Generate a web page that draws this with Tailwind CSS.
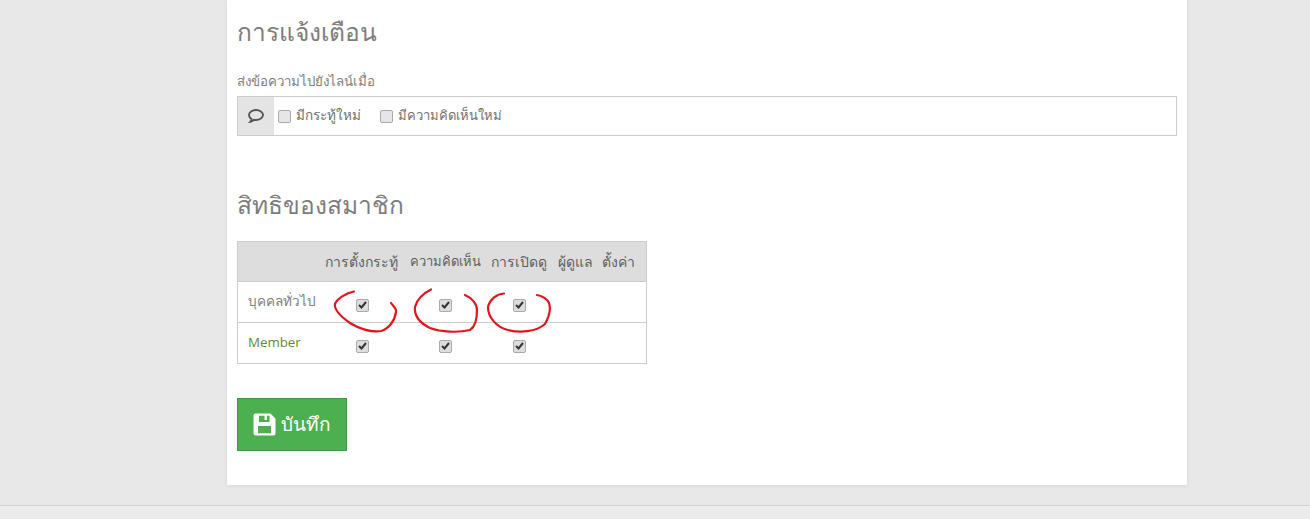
<!DOCTYPE html>
<html lang="th">
<head>
<meta charset="utf-8">
<script src="https://cdn.jsdelivr.net/npm/@tailwindcss/browser@4"></script>
<title>ตั้งค่า</title>
</head>
<body class="bg-[#e8e8e8] font-['Open_Sans','Noto_Sans',sans-serif] text-[#777] overflow-hidden">
<div class="h-[519px] flex flex-col">
  <main class="w-[960px] h-[485px] ml-[227px] bg-white shadow-[0_1px_4px_rgba(0,0,0,0.08)] px-[10px] shrink-0">
    <h2 class="pt-[15px] h-[50px] text-[24.500px] leading-[34px] text-[#7d7d7d]">การแจ้งเตือน</h2>
    <label class="block mt-[20px] h-[20px] text-[13.300px] leading-[22px] text-[#808080]">ส่งข้อความไปยังไลน์เมื่อ</label>
    <div class="mt-[6px] h-[40px] border border-[#ccc] flex items-center">
      <span class="w-[36px] h-full bg-[#e4e4e4] flex items-center justify-center">
        <svg width="16" height="14" viewBox="0 0 16 14" fill="none" stroke="#555" stroke-width="1.900"><path d="M8 1c3.800 0 7 2.200 7 5s-3.200 5-7 5c-.7 0-1.300-.1-2-.2-1 .9-2.200 1.700-3.700 2 .7-.8 1.100-1.800 1.200-2.800C2 9 1 7.600 1 6c0-2.800 3.200-5 7-5z"/></svg>
      </span>
      <div class="flex items-center text-[13.500px] text-[#707070] ml-[4px] -mt-[1px]">
        <span class="w-[13px] h-[13px] mr-[5px] mt-[1px] rounded-[2px] border border-[#aaa] bg-[#e6e6e6]"></span>
        <span class="w-[64px] mr-[20px] whitespace-nowrap">มีกระทู้ใหม่</span>
        <span class="w-[13px] h-[13px] mr-[5px] mt-[1px] rounded-[2px] border border-[#aaa] bg-[#e6e6e6]"></span>
        <span class="text-[13px]">มีความคิดเห็นใหม่</span>
      </div>
    </div>
    <h2 class="mt-[52px] h-[40px] text-[24.500px] leading-[34px] text-[#7d7d7d]">สิทธิของสมาชิก</h2>
    <div class="relative mt-[13px] w-[410px]">
      <table class="w-[410px] border-collapse border border-[#ccc] text-[14px] table-fixed">
        <thead>
          <tr class="h-[40px] bg-[#ddd] text-[#5e5e5e]">
            <th class="w-[83px] font-normal"></th>
            <th class="w-[83px] font-normal whitespace-nowrap pr-[2px]">การตั้งกระทู้</th>
            <th class="w-[83px] font-normal whitespace-nowrap text-[13px]">ความคิดเห็น</th>
            <th class="w-[65px] font-normal whitespace-nowrap">การเปิดดู</th>
            <th class="w-[47px] font-normal whitespace-nowrap">ผู้ดูแล</th>
            <th class="font-normal whitespace-nowrap pr-[7px]">ตั้งค่า</th>
          </tr>
        </thead>
        <tbody>
          <tr class="h-[41px] border-t border-[#ccc]">
            <td class="pl-[10px] pb-[2px] whitespace-nowrap text-[13.500px] text-[#808080]">บุคคลทั่วไป</td>
            <td><span class="mx-auto mt-[6px] w-[13px] h-[13px] rounded-[2px] border border-[#aaa] bg-[#ddd] flex items-center justify-center"><svg width="9" height="8" viewBox="0 0 9 8" fill="none" stroke="#333" stroke-width="2"><path d="M1 4l2.500 2.500L8 1"/></svg></span></td>
            <td><span class="mx-auto mt-[6px] w-[13px] h-[13px] rounded-[2px] border border-[#aaa] bg-[#ddd] flex items-center justify-center"><svg width="9" height="8" viewBox="0 0 9 8" fill="none" stroke="#333" stroke-width="2"><path d="M1 4l2.500 2.500L8 1"/></svg></span></td>
            <td><span class="mx-auto mt-[6px] w-[13px] h-[13px] rounded-[2px] border border-[#aaa] bg-[#ddd] flex items-center justify-center"><svg width="9" height="8" viewBox="0 0 9 8" fill="none" stroke="#333" stroke-width="2"><path d="M1 4l2.500 2.500L8 1"/></svg></span></td>
            <td></td><td></td>
          </tr>
          <tr class="h-[41px] border-t border-[#ccc]">
            <td class="pl-[10px] text-[13.300px] text-[#5d8a36]">Member</td>
            <td><span class="mx-auto mt-[6px] w-[13px] h-[13px] rounded-[2px] border border-[#aaa] bg-[#ddd] flex items-center justify-center"><svg width="9" height="8" viewBox="0 0 9 8" fill="none" stroke="#333" stroke-width="2"><path d="M1 4l2.500 2.500L8 1"/></svg></span></td>
            <td><span class="mx-auto mt-[6px] w-[13px] h-[13px] rounded-[2px] border border-[#aaa] bg-[#ddd] flex items-center justify-center"><svg width="9" height="8" viewBox="0 0 9 8" fill="none" stroke="#333" stroke-width="2"><path d="M1 4l2.500 2.500L8 1"/></svg></span></td>
            <td><span class="mx-auto mt-[6px] w-[13px] h-[13px] rounded-[2px] border border-[#aaa] bg-[#ddd] flex items-center justify-center"><svg width="9" height="8" viewBox="0 0 9 8" fill="none" stroke="#333" stroke-width="2"><path d="M1 4l2.500 2.500L8 1"/></svg></span></td>
            <td></td><td></td>
          </tr>
        </tbody>
      </table>
      <svg class="absolute left-0 top-0 pointer-events-none" width="410" height="123" viewBox="237 241 410 123" fill="none" stroke="#e2141c" stroke-width="2.200" stroke-linecap="round" stroke-linejoin="round">
        <path d="M354 291.500C346 293 337 299 335 304C334 310 340 316 350 323C358 328 371 333 381 331C389 329 395 320 396 312C397 309 393 306 391 303"/>
        <path d="M431 289.500C424 293 417 299 415 307C414 316 420 323 430 328C441 332 458 333 470 330C475 327 477 320 477 310C477 304 472 298 465 295"/>
        <path d="M504 293.500C497 294 490 299 488 307C488 317 496 327 508 330C520 333 536 332 545 324C549 317 551 309 549 303C547 299 542 296 537 295"/>
      </svg>
    </div>
    <button class="mt-[34px] w-[110px] h-[53px] bg-[#4caf50] border border-[#3f9a44] text-white text-[19px] flex items-center justify-center gap-[5px] pr-[1px]">
      <svg width="23" height="23" viewBox="0 0 23 23" fill="#fff"><path fill-rule="evenodd" d="M2.500 .5H17.500L22.500 5.500V20a2.500 2.500 0 0 1-2.500 2.500H3A2.500 2.500 0 0 1 .5 20V2.500a2 2 0 0 1 2-2zM6 2.800V9h10.500V2.800H14V7h-2.500V2.800H6zM5 13v7.300h13V13H5z"/></svg>
      <span>บันทึก</span>
    </button>
  </main>
  <footer class="mt-[20px] flex-1 border-t border-[#d2d2d2] bg-[#ebebeb]"></footer>
</div>
</body>
</html>
